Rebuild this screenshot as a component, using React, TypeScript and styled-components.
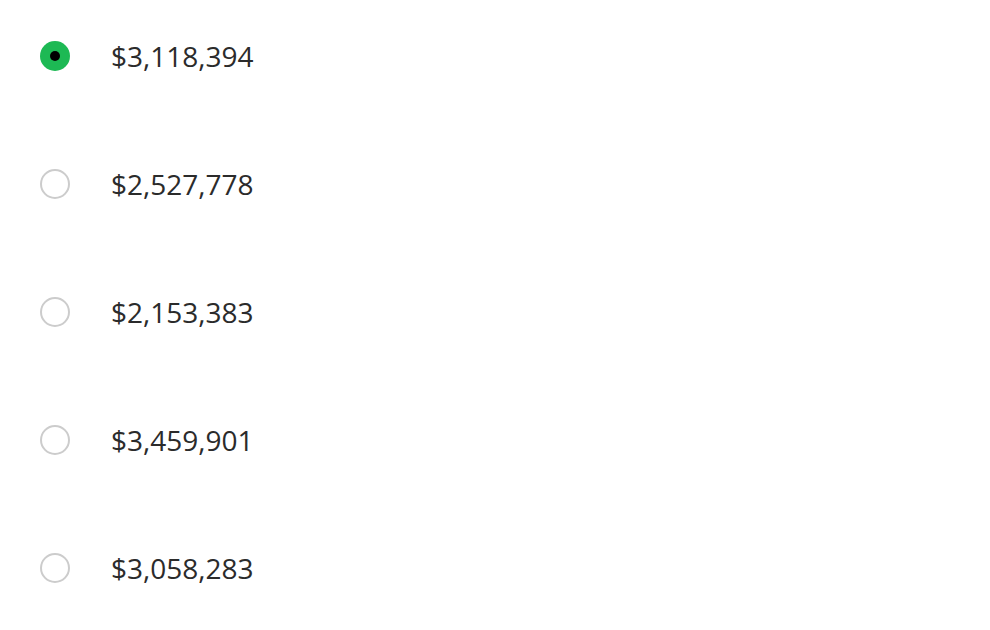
import React, { useState } from "react";
import styled, { createGlobalStyle } from "styled-components";

const Global = createGlobalStyle`
  body {
    margin: 0;
    background: #ffffff;
    font-family: "Open Sans", "Liberation Sans", sans-serif;
  }
`;

const List = styled.div`
  display: flex;
  flex-direction: column;
  gap: 64px;
  padding: 24px 40px;
`;

const Option = styled.label`
  display: flex;
  align-items: center;
  height: 64px;
  gap: 41px;
  cursor: pointer;
`;

const Radio = styled.span<{ $checked: boolean }>`
  box-sizing: border-box;
  width: 30px;
  height: 30px;
  border-radius: 50%;
  flex-shrink: 0;
  display: flex;
  align-items: center;
  justify-content: center;
  border: ${(p) => (p.$checked ? "none" : "2px solid #cccccc")};
  background: ${(p) => (p.$checked ? "#1db954" : "#ffffff")};
  &::after {
    content: "";
    width: 10px;
    height: 10px;
    border-radius: 50%;
    background: #000000;
    display: ${(p) => (p.$checked ? "block" : "none")};
  }
`;

const Amount = styled.span`
  font-size: 28px;
  color: #2b2b2b;
`;

const amounts = ["$3,118,394", "$2,527,778", "$2,153,383", "$3,459,901", "$3,058,283"];

export default function App() {
  const [selected, setSelected] = useState(0);
  return (
    <>
      <Global />
      <List>
        {amounts.map((a, i) => (
          <Option key={a} onClick={() => setSelected(i)}>
            <Radio $checked={selected === i} />
            <Amount>{a}</Amount>
          </Option>
        ))}
      </List>
    </>
  );
}
